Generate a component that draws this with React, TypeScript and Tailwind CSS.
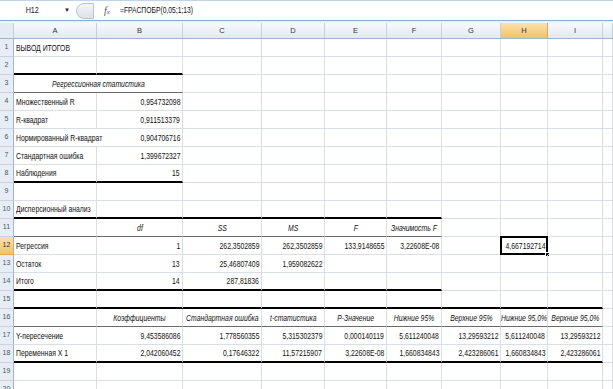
import React from "react";

const COLS = ["A", "B", "C", "D", "E", "F", "G", "H", "I", ""];
const GRID = "grid grid-cols-[14px_83px_86px_79px_63px_62px_55px_59px_47px_55px_1fr]";

type Kind = "l" | "r" | "h";

// one entry per column A..I; null = empty
const DATA: Record<number, { k: Kind; v: (string | null)[] }> = {
  1: { k: "l", v: ["ВЫВОД ИТОГОВ"] },
  4: { k: "r", v: ["Множественный R", "0,954732098"] },
  5: { k: "r", v: ["R-квадрат", "0,911513379"] },
  6: { k: "r", v: ["Нормированный R-квадрат", "0,904706716"] },
  7: { k: "r", v: ["Стандартная ошибка", "1,399672327"] },
  8: { k: "r", v: ["Наблюдения", "15"] },
  10: { k: "l", v: ["Дисперсионный анализ"] },
  11: { k: "h", v: [null, "df", "SS", "MS", "F", "Значимость F"] },
  12: {
    k: "r",
    v: ["Регрессия", "1", "262,3502859", "262,3502859", "133,9148655", "3,22608E-08", null, "4,667192714"],
  },
  13: { k: "r", v: ["Остаток", "13", "25,46807409", "1,959082622"] },
  14: { k: "r", v: ["Итого", "14", "287,81836"] },
  16: {
    k: "h",
    v: [
      null,
      "Коэффициенты",
      "Стандартная ошибка",
      "t-статистика",
      "P-Значение",
      "Нижние 95%",
      "Верхние 95%",
      "Нижние 95,0%",
      "Верхние 95,0%",
    ],
  },
  17: {
    k: "r",
    v: [
      "Y-пересечение",
      "9,453586086",
      "1,778560355",
      "5,315302379",
      "0,000140119",
      "5,611240048",
      "13,29593212",
      "5,611240048",
      "13,29593212",
    ],
  },
  18: {
    k: "r",
    v: [
      "Переменная X 1",
      "2,042060452",
      "0,17646322",
      "11,57215907",
      "3,22608E-08",
      "1,660834843",
      "2,423286061",
      "1,660834843",
      "2,423286061",
    ],
  },
};

// bottom borders of a row, [first col, last col]
const THICK: Record<number, [number, number]> = { 2: [0, 1], 8: [0, 1], 10: [0, 5], 14: [0, 5], 15: [0, 8], 18: [0, 8] };
const THIN: Record<number, [number, number]> = { 3: [0, 1], 11: [0, 5], 16: [0, 8] };

const inRange = (m: Record<number, [number, number]>, row: number, col: number) =>
  m[row] !== undefined && col >= m[row][0] && col <= m[row][1];

function FormulaBar() {
  return (
    <div className="flex h-[21px] items-center border-t border-b border-t-[#c4d4e8] border-b-[#8ea8cc] bg-white">
      <div className="flex h-full w-[76px] items-center">
        <span className="w-[64px] text-center text-[9px] text-[#222]">
          <span className="inline-block scale-x-[0.8]">H12</span>
        </span>
        <span className="text-[6px] text-[#222]">▼</span>
      </div>
      <div className="h-[16px] w-[18px] rounded-l-full border border-[#b7c3d3] bg-gradient-to-b from-[#f3f5f8] to-[#dde3ea]" />
      <div className="flex h-full w-[26px] items-center justify-center">
        <span className="font-['Liberation_Serif',serif] text-[10px] italic text-[#555]">
          f<span className="text-[7px]">x</span>
        </span>
      </div>
      <span className="inline-block origin-left scale-x-[0.75] text-[9px] text-[#111]">=FРАСПОБР(0,05;1;13)</span>
    </div>
  );
}

function Header() {
  return (
    <div className={`${GRID} h-[16px] border-b border-[#9eb6ce] bg-gradient-to-b from-[#f7f9fc] to-[#e3e9f1]`}>
      <div className="border-r border-[#c5d0de] bg-[#e4ebf4]" />
      {COLS.map((c, i) => (
        <div
          key={i}
          className={
            c === "H"
              ? "flex items-center justify-center border-r border-[#e0a94a] bg-gradient-to-b from-[#fbe1ad] to-[#f2c264] text-[7.5px] text-[#333]"
              : "flex items-center justify-center border-r border-[#c5d0de] text-[7.5px] text-[#333]"
          }
        >
          {c}
        </div>
      ))}
    </div>
  );
}

function Row({ n }: { n: number }) {
  const row = DATA[n];
  const cells: React.ReactNode[] = [];
  const sel = n === 12;
  cells.push(
    <div
      key="h"
      className={
        sel
          ? "flex items-center justify-center border-r border-b border-[#e0a94a] bg-gradient-to-b from-[#fbe1ad] to-[#f2c264] text-[7px] text-[#333]"
          : "flex items-center justify-center border-r border-b border-r-[#9eb6ce] border-b-[#c9d3e0] bg-[#e7edf5] text-[7px] text-[#4a5566]"
      }
    >
      {n}
    </div>,
  );
  let col = 0;
  while (col < COLS.length) {
    const v = row?.v[col] ?? null;
    const merged = n === 3 && col === 0;
    const span = merged ? 2 : 1;
    const bottom = inRange(THICK, n, col)
      ? "border-b-2 border-b-black"
      : inRange(THIN, n, col)
        ? "border-b border-b-[#6b6b6b]"
        : "border-b border-b-[#dadfe7]";
    const overflow = n === 6 && col === 0;
    const right = overflow ? "" : "border-r border-r-[#dadfe7]";
    let align = "justify-start pl-[2px]";
    let origin = "origin-left";
    let style = "";
    if (merged) {
      align = "justify-center";
      origin = "origin-center";
      style = "italic";
    } else if (row && col > 0) {
      if (row.k === "h") {
        align = "justify-center";
        origin = "origin-center";
        style = "italic";
      } else if (row.k === "r") {
        align = "justify-end pr-[2px]";
        origin = "origin-right";
      }
    }
    const text = merged ? "Регрессионная статистика" : v;
    cells.push(
      <div
        key={col}
        className={`relative flex items-center whitespace-nowrap text-[9.5px] leading-none text-[#111] ${align} ${style} ${bottom} ${right} ${merged ? "col-span-2" : ""}`}
      >
        {text && <span className={`inline-block scale-x-[0.72] ${origin}`}>{text}</span>}
        {sel && col === 7 && (
          <>
            <div className="absolute -top-px -left-px -right-px -bottom-px border-2 border-black" />
            <div className="absolute -right-[3px] -bottom-[3px] h-[5px] w-[5px] border border-white bg-black" />
          </>
        )}
      </div>,
    );
    col += span;
  }
  return <div className={`${GRID} h-[18px]`}>{cells}</div>;
}

export default function App() {
  const rows = Array.from({ length: 20 }, (_, i) => i + 1);
  return (
    <div className="h-[389px] w-[613px] overflow-hidden bg-white font-['Liberation_Sans',sans-serif]">
      <FormulaBar />
      <div className="h-[2px] bg-[#eef3fa]" />
      <Header />
      {rows.map((n) => (
        <Row key={n} n={n} />
      ))}
    </div>
  );
}
